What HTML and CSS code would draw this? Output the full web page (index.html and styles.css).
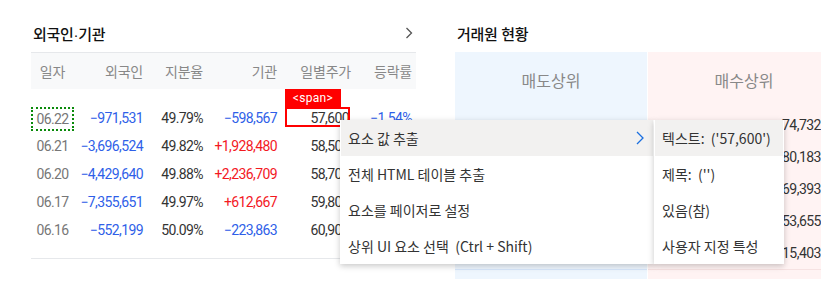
FILE: index.html
```html
<!DOCTYPE html>
<html>
<head>
    <title>외국인·기관 / 거래원 현황</title>
    <link rel="stylesheet" href="styles.css">
</head>
<body>
    <div class="page">
        <section class="investor">
            <div class="sec-head">
                <h2>외국인·기관</h2>
                <svg class="more" width="8" height="12" viewBox="0 0 8 12"><path d="M1.5 1 L6.5 6 L1.5 11" fill="none" stroke="#555" stroke-width="1.3"/></svg>
            </div>
            <table class="trend">
                <thead>
                    <tr><th class="date">일자</th><th>외국인</th><th>지분율</th><th>기관</th><th>일별주가</th><th>등락률</th></tr>
                </thead>
                <tbody>
                    <tr class="first">
                        <td class="date"><span class="picked">06.22</span></td>
                        <td class="down">−971,531</td><td>49.79%</td><td class="down">−598,567</td>
                        <td class="price"><span class="tag">&lt;span&gt;</span><span class="hit"></span>57,600</td>
                        <td class="down">−1.54%</td>
                    </tr>
                    <tr><td class="date">06.21</td><td class="down">−3,696,524</td><td>49.82%</td><td class="up">+1,928,480</td><td class="price">58,500</td><td class="up">+0.86%</td></tr>
                    <tr><td class="date">06.20</td><td class="down">−4,429,640</td><td>49.88%</td><td class="up">+2,236,709</td><td class="price">58,700</td><td class="down">−1.84%</td></tr>
                    <tr><td class="date">06.17</td><td class="down">−7,355,651</td><td>49.97%</td><td class="up">+612,667</td><td class="price">59,800</td><td class="down">−1.81%</td></tr>
                    <tr class="last"><td class="date">06.16</td><td class="down">−552,199</td><td>50.09%</td><td class="down">−223,863</td><td class="price">60,900</td><td class="down">−1.93%</td></tr>
                </tbody>
            </table>
        </section>

        <section class="broker">
            <div class="sec-head"><h2>거래원 현황</h2></div>
            <div class="broker-cols">
                <div class="bcol sell">
                    <div class="bcol-head">매도상위</div>
                    <div class="brow"></div><div class="brow"></div><div class="brow"></div><div class="brow"></div><div class="brow last"></div>
                </div>
                <div class="bcol buy">
                    <div class="bcol-head">매수상위</div>
                    <div class="brow">74,732</div>
                    <div class="brow">80,183</div>
                    <div class="brow">69,393</div>
                    <div class="brow">53,655</div>
                    <div class="brow last">15,403</div>
                </div>
            </div>
        </section>
    </div>

    <div class="ctx-menu">
        <div class="item on">요소 값 추출 <svg class="arrow" width="8" height="14" viewBox="0 0 8 14"><path d="M1 1 L7 7 L1 13" fill="none" stroke="#1a6fe0" stroke-width="1.3"/></svg></div>
        <div class="item">전체 HTML 테이블 추출</div>
        <div class="item">요소를 페이저로 설정</div>
        <div class="item">상위 UI 요소 선택&nbsp; (Ctrl + Shift)</div>
    </div>
    <div class="ctx-sub">
        <div class="item on">텍스트:&nbsp; ('57,600')</div>
        <div class="item">제목:&nbsp; ('')</div>
        <div class="item">있음(참)</div>
        <div class="item">사용자 지정 특성</div>
    </div>
</body>
</html>
```

FILE: styles.css
```css
body { margin: 0; font-family: Roboto, "Noto Sans CJK KR", sans-serif; font-size: 14px; color: #333; background: #fff; overflow: hidden; width: 821px; height: 281px; position: relative; }
.page { display: flex; gap: 39px; padding-left: 31px; width: 1000px; }
.investor { width: 385px; flex: none; }
.sec-head { height: 38px; padding-top: 14px; display: flex; align-items: center; justify-content: space-between; }
.sec-head h2 { margin: 0 0 0 2px; font-family: "Liberation Sans", "Noto Sans CJK KR", sans-serif; font-size: 15px; font-weight: 500; color: #111; letter-spacing: -0.3px; }
.more { margin-right: 3px; }

.trend { width: 385px; border-collapse: collapse; table-layout: fixed; letter-spacing: -0.6px; }
.trend thead tr { background: #f8f9fa; border-top: 1px solid #e6e8eb; height: 36px; }
.trend th { font-family: "Noto Sans CJK KR", sans-serif; font-weight: 400; color: #888; text-align: right; padding: 0; letter-spacing: -0.2px; }
.trend th:nth-child(1) { width: 43px; }
.trend th:nth-child(2) { width: 69px; }
.trend th:nth-child(3) { width: 60px; }
.trend th:nth-child(4) { width: 74px; }
.trend th:nth-child(5) { width: 74px; }
.trend th:last-child, .trend td:last-child { padding-right: 4px; }
.trend th.date, .trend td.date { text-align: center; }
.trend tbody { border-bottom: 1px solid #e6e8eb; }
.trend td { padding: 0; height: 28px; line-height: 28px; text-align: right; white-space: nowrap; vertical-align: middle; }
.trend tr.first td { padding-top: 15px; }
.trend tr.last td { padding-bottom: 14px; }
.trend td.date { color: #777; }
.down { color: #2f5fe8; }
.up { color: #f3191f; }
.picked { display: inline-block; box-sizing: border-box; width: 43px; height: 24px; line-height: 20px; border: 2px dotted #0a8a0a; vertical-align: middle; }
.trend td.price { position: relative; padding-right: 2px; }
.hit { position: absolute; left: 8px; right: 1px; top: 18px; height: 20px; border: 2px solid #f00; box-sizing: border-box; }
.tag { position: absolute; left: 8px; top: 0; width: 56px; height: 18px; background: #f00; color: #fff; font-size: 12px; line-height: 18px; text-align: center; letter-spacing: 0.3px; }

.broker { width: 385px; flex: none; }
.broker-cols { display: flex; gap: 1px; }
.bcol { width: 192px; padding-bottom: 9px; }
.sell { background: #eef6fe; }
.buy { background: #fff3f3; }
.bcol-head { height: 57px; line-height: 57px; text-align: center; font-family: "Noto Sans CJK KR", sans-serif; font-size: 16px; color: #888; }
.brow { height: 32px; line-height: 32px; text-align: right; padding-right: 19px; font-size: 14px; letter-spacing: -0.5px; }
.sell .brow.last { border-bottom: 1px solid #d6e6fa; }
.buy .brow.last { border-bottom: 1px solid #f6e2e2; }

.ctx-menu, .ctx-sub { position: absolute; top: 120px; background: #fff; box-shadow: 0 2px 6px rgba(0,0,0,0.22); font-family: "Noto Sans CJK KR", sans-serif; font-size: 14px; color: #333; padding: 0 1px; }
.ctx-menu { left: 340px; width: 312px; }
.ctx-sub { left: 654px; width: 128px; }
.item { height: 36px; line-height: 36px; padding-left: 7px; display: flex; align-items: center; justify-content: space-between; padding-right: 9px; }
.item.on { background: #f2f1f0; }
.arrow { flex: none; }
```
